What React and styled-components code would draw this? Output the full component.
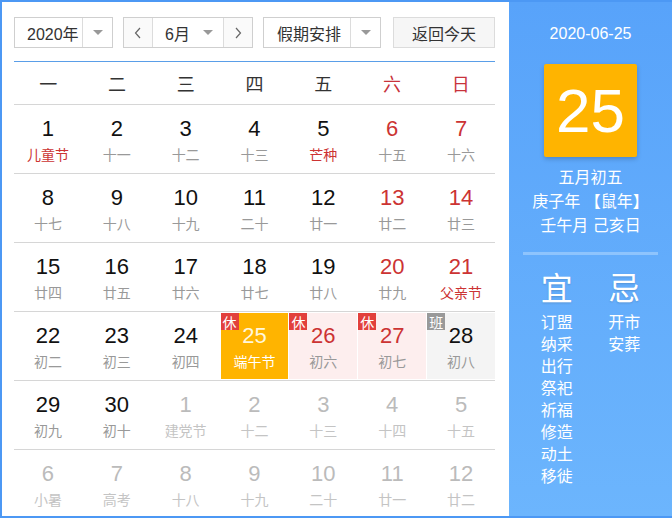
import styled, { createGlobalStyle } from 'styled-components';

const Global = createGlobalStyle`
  body {
    margin: 0;
    background: #fff;
    font-family: "Liberation Sans", "Noto Sans CJK SC", sans-serif;
  }
`;

const Frame = styled.div`
  display: flex;
  width: 672px;
  height: 518px;
  box-sizing: border-box;
  border: 2px solid #4c98f4;
  border-right: none;
  overflow: hidden;
`;

const Main = styled.div`
  width: 507px;
  flex-shrink: 0;
  box-sizing: border-box;
  padding: 15px 14px 0 12px;
  background: #fff;
`;

const Toolbar = styled.div`
  display: flex;
  height: 31px;
  margin-bottom: 13px;
`;

const Box = styled.div`
  display: flex;
  height: 31px;
  box-sizing: border-box;
  border: 1px solid #cfcfcf;
  background: #fff;
  width: ${p => p.w}px;
  margin-right: ${p => p.gap || 0}px;
`;

const Field = styled.div`
  flex: 1;
  display: flex;
  align-items: center;
  padding-left: ${p => p.pl || 0}px;
  font-size: 16px;
  color: #333;
`;

const ArrowCell = styled.div`
  width: ${p => p.w || 30}px;
  display: flex;
  align-items: center;
  justify-content: center;
  border-left: ${p => (p.line ? '1px solid #dcdcdc' : 'none')};
  &::after {
    content: '';
    border-left: 5px solid transparent;
    border-right: 5px solid transparent;
    border-top: 5px solid #999;
  }
`;

const NavBtn = styled.div`
  width: 28px;
  display: flex;
  align-items: center;
  justify-content: center;
  background: #fafafa;
  color: #666;
  border-${p => p.side}: 1px solid #dcdcdc;
`;

const TodayBtn = styled.div`
  width: 102px;
  height: 31px;
  box-sizing: border-box;
  border: 1px solid #dcdcdc;
  background: #f6f6f6;
  display: flex;
  align-items: center;
  justify-content: center;
  font-size: 16px;
  color: #333;
`;

const Head = styled.div`
  display: grid;
  grid-template-columns: repeat(7, 1fr);
  height: 42px;
  border-top: 1px solid #5a9ee8;
  border-bottom: 1px solid #d6d6d6;
`;

const HeadCell = styled.div`
  display: flex;
  align-items: center;
  justify-content: center;
  font-size: 18px;
  color: ${p => (p.weekend ? '#c8333b' : '#333')};
`;

const Row = styled.div`
  display: grid;
  grid-template-columns: repeat(7, 1fr);
  column-gap: 1px;
  height: 69px;
  box-sizing: border-box;
  padding: 1px 0;
  border-bottom: ${p => (p.last ? 'none' : '1px solid #d6d6d6')};
`;

const bgFor = k =>
  k === 'sel' ? '#ffb400' : k === 'rest' ? '#fdeeee' : k === 'work' ? '#f4f4f4' : 'transparent';

const Cell = styled.div`
  position: relative;
  display: flex;
  flex-direction: column;
  align-items: center;
  padding-top: 10px;
  background: ${p => bgFor(p.kind)};
`;

const Num = styled.div`
  font-size: 22px;
  line-height: 25px;
  color: ${p => p.color};
`;

const Lunar = styled.div`
  margin-top: 4px;
  font-size: 14px;
  line-height: 20px;
  color: ${p => p.color};
`;

const Tag = styled.span`
  position: absolute;
  top: 0;
  left: 0;
  width: 18px;
  height: 17px;
  display: flex;
  align-items: center;
  justify-content: center;
  font-size: 14px;
  color: #fff;
  background: ${p => (p.work ? '#999' : '#e2403c')};
`;

const Side = styled.div`
  flex: 1;
  display: flex;
  flex-direction: column;
  align-items: center;
  padding: 22px 14px 0;
  background: linear-gradient(#58a3fa, #6cb5fd);
  color: #fff;
`;

const DateLine = styled.div`
  font-size: 16px;
  line-height: 20px;
`;

const BigDay = styled.div`
  margin-top: 20px;
  width: 93px;
  height: 93px;
  border-radius: 2px;
  background: #ffb400;
  box-shadow: 0 2px 5px rgba(0, 0, 0, 0.2);
  display: flex;
  align-items: center;
  justify-content: center;
  font-size: 62px;
  color: #fff;
`;

const Info = styled.div`
  margin-top: 9px;
  text-align: center;
  font-size: 16px;
  line-height: 24px;
`;

const Divider = styled.div`
  align-self: stretch;
  margin-top: 14px;
  height: 3px;
  background: #8ec4fd;
`;

const Columns = styled.div`
  align-self: stretch;
  display: grid;
  grid-template-columns: 1fr 1fr;
  margin-top: 14px;
`;

const Col = styled.div`
  display: flex;
  flex-direction: column;
  align-items: center;
`;

const Big = styled.div`
  font-size: 32px;
  line-height: 40px;
  text-shadow: 0 1px 2px rgba(0, 0, 0, 0.15);
`;

const List = styled.div`
  margin-top: 3px;
  display: flex;
  flex-direction: column;
  align-items: center;
`;

const Item = styled.div`
  font-size: 16px;
  line-height: 22px;
`;

const Chevron = ({ dir }) => (
  <svg width="8" height="12" viewBox="0 0 8 12">
    <path
      d={dir === 'left' ? 'M6 1 L1.5 6 L6 11' : 'M2 1 L6.5 6 L2 11'}
      fill="none"
      stroke="#666"
      strokeWidth="1.2"
    />
  </svg>
);

const weekDays = ['一', '二', '三', '四', '五', '六', '日'];

// [day, lunar, flags]  o=other month, red=red number, hol=red lunar, sel/rest/work=marked days
const rows = [
  [[1, '儿童节', 'hol'], [2, '十一'], [3, '十二'], [4, '十三'], [5, '芒种', 'hol'], [6, '十五', 'red'], [7, '十六', 'red']],
  [[8, '十七'], [9, '十八'], [10, '十九'], [11, '二十'], [12, '廿一'], [13, '廿二', 'red'], [14, '廿三', 'red']],
  [[15, '廿四'], [16, '廿五'], [17, '廿六'], [18, '廿七'], [19, '廿八'], [20, '廿九', 'red'], [21, '父亲节', 'red hol']],
  [[22, '初二'], [23, '初三'], [24, '初四'], [25, '端午节', 'sel'], [26, '初六', 'rest'], [27, '初七', 'rest'], [28, '初八', 'work']],
  [[29, '初九'], [30, '初十'], [1, '建党节', 'o'], [2, '十二', 'o'], [3, '十三', 'o'], [4, '十四', 'o'], [5, '十五', 'o']],
  [[6, '小暑', 'o'], [7, '高考', 'o'], [8, '十八', 'o'], [9, '十九', 'o'], [10, '二十', 'o'], [11, '廿一', 'o'], [12, '廿二', 'o']],
];

const DayCell = ({ d }) => {
  const [day, lunar, f = ''] = d;
  const flags = f.split(' ');
  const kind = ['sel', 'rest', 'work'].find(k => flags.includes(k)) || '';
  let numColor = '#111';
  let lunarColor = '#999';
  if (flags.includes('red') || kind === 'rest') numColor = '#cc3333';
  if (flags.includes('hol')) lunarColor = '#cc3333';
  if (flags.includes('o')) {
    numColor = '#bbb';
    lunarColor = '#c4c4c4';
  }
  if (kind === 'sel') {
    numColor = '#fff7dc';
    lunarColor = '#fff';
  }
  return (
    <Cell kind={kind}>
      {kind && <Tag work={kind === 'work'}>{kind === 'work' ? '班' : '休'}</Tag>}
      <Num color={numColor}>{day}</Num>
      <Lunar color={lunarColor}>{lunar}</Lunar>
    </Cell>
  );
};

export default function App() {
  return (
    <>
      <Global />
      <Frame>
        <Main>
          <Toolbar>
            <Box w={99} gap={10}>
              <Field pl={12}>2020年</Field>
              <ArrowCell line w={29} />
            </Box>
            <Box w={130} gap={10}>
              <NavBtn side="right"><Chevron dir="left" /></NavBtn>
              <Field pl={12}>6月</Field>
              <ArrowCell w={30} />
              <NavBtn side="left"><Chevron dir="right" /></NavBtn>
            </Box>
            <Box w={118} gap={12}>
              <Field pl={13}>假期安排</Field>
              <ArrowCell line w={29} />
            </Box>
            <TodayBtn>返回今天</TodayBtn>
          </Toolbar>
          <Head>
            {weekDays.map((w, i) => (
              <HeadCell key={w} weekend={i > 4}>{w}</HeadCell>
            ))}
          </Head>
          {rows.map((r, i) => (
            <Row key={i} last={i === rows.length - 1}>
              {r.map((d, j) => (
                <DayCell key={j} d={d} />
              ))}
            </Row>
          ))}
        </Main>
        <Side>
          <DateLine>2020-06-25</DateLine>
          <BigDay>25</BigDay>
          <Info>
            五月初五<br />
            庚子年 【鼠年】<br />
            壬午月 己亥日
          </Info>
          <Divider />
          <Columns>
            <Col>
              <Big>宜</Big>
              <List>
                {['订盟', '纳采', '出行', '祭祀', '祈福', '修造', '动土', '移徙'].map(t => (
                  <Item key={t}>{t}</Item>
                ))}
              </List>
            </Col>
            <Col>
              <Big>忌</Big>
              <List>
                {['开市', '安葬'].map(t => (
                  <Item key={t}>{t}</Item>
                ))}
              </List>
            </Col>
          </Columns>
        </Side>
      </Frame>
    </>
  );
}
